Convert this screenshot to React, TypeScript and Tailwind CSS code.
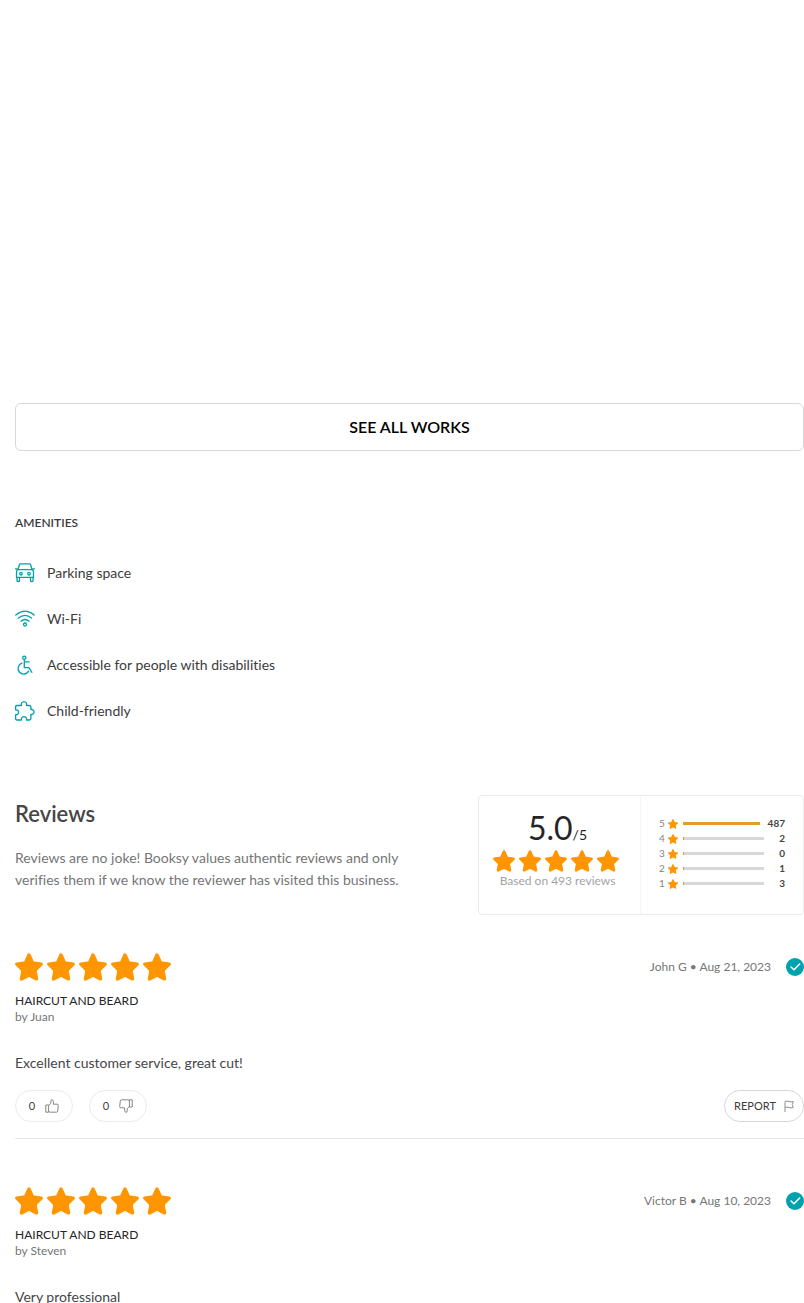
import type { ReactNode } from 'react';

const amenities: { label: string; icon: ReactNode }[] = [
    {
        label: 'Parking space',
        icon: (
            <>
                <path d="M3 6.500 4.400 1.700Q4.700.8 5.500.8h9q.8 0 1.100.9L17 6.500" />
                <path d="M.5 5.800h1.800M17.700 5.800h1.800M2.700 6.600h14.600q1.200 1 1.200 2.600v5.200h-17V9.200q0-1.600 1.200-2.600z" />
                <path d="M2 14.400v3.400q0 .7.7.7h1.100q.7 0 .7-.7v-3.400M15.500 14.400v3.400q0 .7.7.7h1.100q.7 0 .7-.7v-3.400" />
                <circle cx="6" cy="10.700" r="1.300" />
                <circle cx="14" cy="10.700" r="1.300" />
            </>
        ),
    },
    {
        label: 'Wi-Fi',
        icon: (
            <>
                <path d="M.8 6Q10-1.600 19.200 6M3.400 9q6.600-5.400 13.200 0M6 12.200q4-3.400 8 0" />
                <circle cx="10" cy="15.500" r="1.500" />
            </>
        ),
    },
    {
        label: 'Accessible for people with disabilities',
        icon: (
            <>
                <circle cx="9.300" cy="2.700" r="1.600" />
                <path d="M9.300 4.300v8.400h4.600l3 4.600M9.300 6.800h4.900M7 8.100a5.600 5.600 0 1 0 6.600 8" />
            </>
        ),
    },
    {
        label: 'Child-friendly',
        icon: (
            <path d="M6.500 4.500a2.700 2.700 0 1 1 4.900 0h3.100q1.400 0 1.400 1.400v2.700a2.500 2.500 0 1 1 0 4.800v4.200q0 1.400-1.400 1.400h-3a2.600 2.600 0 1 0-5 0h-4.600q-1.300 0-1.300-1.400v-3.900a2.500 2.500 0 1 0 0-4.900V5.900q0-1.400 1.400-1.400z" />
        ),
    },
];

const ratings = [
    { stars: 5, count: 487 },
    { stars: 4, count: 2 },
    { stars: 3, count: 0 },
    { stars: 2, count: 1 },
    { stars: 1, count: 3 },
];

const reviews = [
    {
        author: 'John G',
        date: 'Aug 21, 2023',
        staff: 'Juan',
        text: 'Excellent customer service, great cut!',
        votes: { up: 0, down: 0 },
    },
    { author: 'Victor B', date: 'Aug 10, 2023', staff: 'Steven', text: 'Very professional' },
];

const total = 493;

function Star({ className }: { className: string }) {
    return (
        <svg viewBox="0 0 28 28" aria-hidden="true" className={`${className} shrink-0 fill-[#ff9500] stroke-[#ff9500]`}>
            <path
                d="M14 2 17.600 10 26.200 11.100 20 17.200 21.500 25.900 14 21.900 6.500 25.900 8 17.200 1.800 11.100 10.400 10z"
                strokeWidth="3.400"
                strokeLinejoin="round"
            />
        </svg>
    );
}

function Thumb({ down = false }: { down?: boolean }) {
    return (
        <svg
            viewBox="0 0 14 14"
            aria-hidden="true"
            className={`size-3.5 fill-none stroke-[#858686] ${down ? 'rotate-180' : ''}`}
            strokeLinejoin="round"
        >
            <path d="M.8 6h2.800v7.200H.8zM3.600 6.400 5.900 4.300V1.600Q5.900.7 6.800.7q1.600 0 1.600 2v2.500h3.800q1.200 0 1.100 1.200l-.6 5.700q-.1 1.100-1.200 1.100H5.200l-1.600-.7" />
        </svg>
    );
}

function Verified() {
    return (
        <svg viewBox="0 0 18 18" role="img" aria-label="Verified" className="size-[18px] fill-none">
            <circle cx="9" cy="9" r="9" fill="#00a3ad" />
            <path d="m5 9 3 2.800 5.700-5.800" stroke="#fff" strokeWidth="1.500" strokeLinecap="round" />
        </svg>
    );
}

function Summary() {
    return (
        <div className="grid h-[120px] w-[326px] shrink-0 grid-cols-2 rounded border border-[#ebebeb]">
            <div className="flex flex-col items-center border-r border-[#f5f5f5] pt-4 pr-1">
                <p className="text-[#252525]">
                    <span className="text-[32px] leading-8">5.0</span>
                    <span className="text-sm leading-none">/5</span>
                </p>
                <div className="mt-1 flex gap-1 pr-1">
                    {ratings.map((r) => (
                        <Star key={r.stars} className="size-[22px]" />
                    ))}
                </div>
                <p className="text-xs leading-[18px] text-[#a3a3a3]">Based on {total} reviews</p>
            </div>
            <ul className="pt-5 pr-[18px] pl-[18px]">
                {ratings.map((r) => (
                    <li key={r.stars} className="flex h-[15px] items-center text-[10px]">
                        <span className="w-[9px] text-[#858585]">{r.stars}</span>
                        <Star className="size-2.5" />
                        <div className="mr-2 ml-[5px] h-[3px] flex-1 bg-[#d8d8d8]">
                            <div
                                className="h-full min-w-px bg-[#e39b2d]"
                                style={{ width: r.count > total / 2 ? '100%' : `${(r.count / total) * 100}%` }}
                            />
                        </div>
                        <span className="min-w-[13px] text-right font-bold text-[#454647]">{r.count}</span>
                    </li>
                ))}
            </ul>
        </div>
    );
}

export default function App() {
    return (
        <main className="min-h-screen bg-white pl-[15px] font-['Lato','Liberation_Sans',sans-serif] text-[#3c3c3c] [font-variant-ligatures:none]">
            {/* WORKS */}
            <section className="pt-[403px]">
                <button className="h-12 w-full rounded-md border border-[#d8d8d8] text-base font-semibold text-black">
                    SEE ALL WORKS
                </button>
            </section>

            {/* AMENITIES */}
            <section className="pt-16">
                <h2 className="text-xs leading-4 font-semibold">AMENITIES</h2>
                <ul className="mt-8 flex flex-col gap-[26px]">
                    {amenities.map((item) => (
                        <li key={item.label} className="flex items-center gap-3 text-sm">
                            <svg
                                viewBox="0 0 20 20"
                                aria-hidden="true"
                                className="size-5 fill-none stroke-[#00a3ad]"
                                strokeWidth="1.300"
                                strokeLinecap="round"
                                strokeLinejoin="round"
                            >
                                {item.icon}
                            </svg>
                            {item.label}
                        </li>
                    ))}
                </ul>
            </section>

            {/* REVIEWS */}
            <section className="pt-[74px]">
                <div className="flex justify-between gap-4">
                    <div className="pt-1">
                        <h2 className="text-[22px] leading-[30px] font-semibold text-[#454647]">Reviews</h2>
                        <p className="mt-[18px] max-w-[410px] text-sm leading-[22px] text-[#757676]">
                            Reviews are no joke! Booksy values authentic reviews and only verifies them if we know the
                            reviewer has visited this business.
                        </p>
                    </div>
                    <Summary />
                </div>

                <div className="mt-[38px] flex flex-col gap-12">
                    {reviews.map((review) => (
                        <article key={review.author} className="border-[#e8e8e8] not-last:border-b not-last:pb-4">
                            <div className="flex items-center justify-between">
                                <div className="flex gap-1">
                                    {ratings.map((r) => (
                                        <Star key={r.stars} className="size-7" />
                                    ))}
                                </div>
                                <div className="flex items-center gap-[15px] text-xs text-[#757676]">
                                    <span>
                                        {review.author} • {review.date}
                                    </span>
                                    <Verified />
                                </div>
                            </div>
                            <h3 className="mt-3 text-xs leading-4 text-[#252525]">HAIRCUT AND BEARD</h3>
                            <p className="text-xs leading-4 text-[#757676]">by {review.staff}</p>
                            <p className="mt-7 text-sm text-[#454647]">{review.text}</p>
                            {review.votes && (
                                <div className="mt-[17px] flex items-center gap-4 text-[11px]">
                                    <button
                                        aria-label="Helpful"
                                        className="flex h-8 w-[58px] items-center justify-center gap-2.5 rounded-full border border-[#ebebeb]"
                                    >
                                        {review.votes.up} <Thumb />
                                    </button>
                                    <button
                                        aria-label="Not helpful"
                                        className="flex h-8 w-[58px] items-center justify-center gap-2.5 rounded-full border border-[#ebebeb]"
                                    >
                                        {review.votes.down} <Thumb down />
                                    </button>
                                    <button className="ml-auto flex h-8 w-20 items-center justify-center gap-2 rounded-full border border-[#d8d8d8]">
                                        REPORT
                                        <svg
                                            viewBox="0 0 10 12"
                                            aria-hidden="true"
                                            className="h-3 w-2.5 fill-none stroke-[#909090]"
                                        >
                                            <path d="M1 12V1.500q2-1 4 0 2 .8 4.300 0L8.300 4.500l1 3q-2.300.8-4.300 0-2-.8-4 0" />
                                        </svg>
                                    </button>
                                </div>
                            )}
                        </article>
                    ))}
                </div>
            </section>
        </main>
    );
}
